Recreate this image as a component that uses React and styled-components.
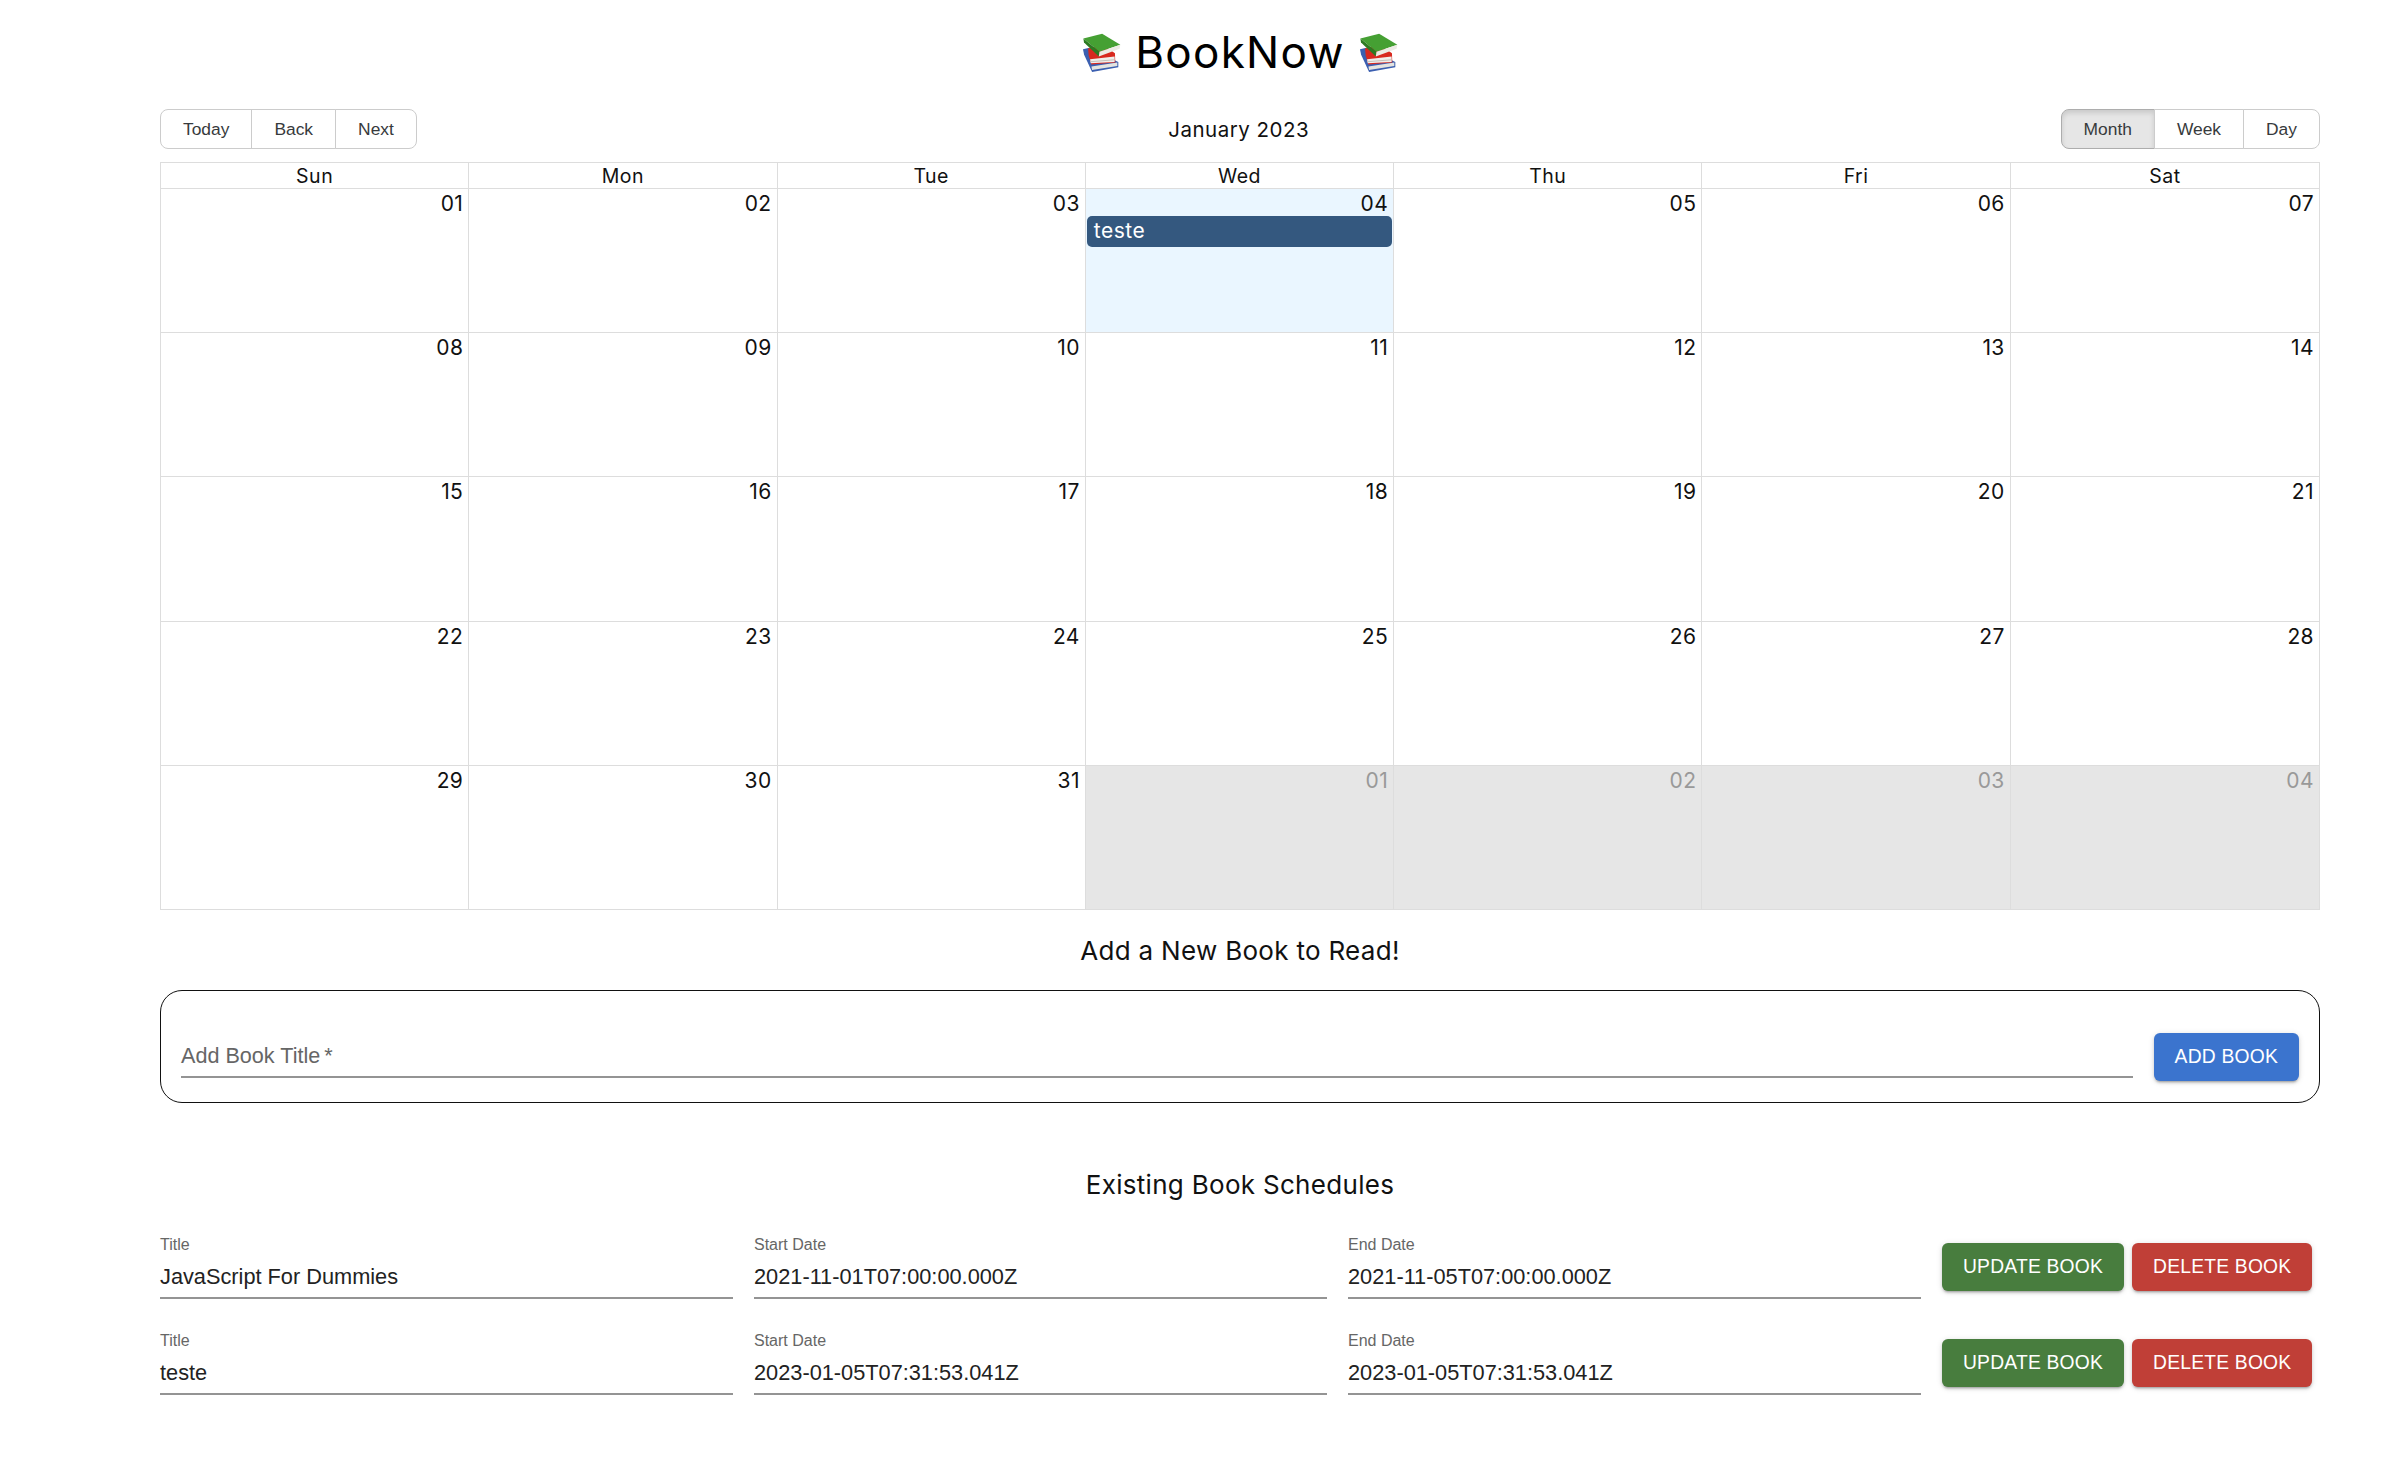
import React from 'react'
import styled, { createGlobalStyle } from 'styled-components'

const Global = createGlobalStyle`
  body {
    margin: 0;
    background: #fff;
    font-family: "Liberation Sans", Arial, sans-serif;
  }
`

const Page = styled.div`
  padding: 0 68px 0 160px;
  height: 1460px;
  box-sizing: border-box;
`
const Header = styled.h1`
  height: 104px;
  margin: 0 0 5px;
  display: flex;
  align-items: center;
  justify-content: center;
  gap: 14px;
  font: 400 44px "Inter", sans-serif;
  letter-spacing: 1.3px;
  color: #000;
`
const Toolbar = styled.div`
  display: flex;
  align-items: center;
  justify-content: space-between;
  height: 40px;
  margin-bottom: 13px;
`
const ToolbarLabel = styled.span`
  font: 400 20.5px "Inter", sans-serif;
  letter-spacing: 0.5px;
  color: #111;
  margin-top: 1px;
`
const BtnGroup = styled.div`
  display: flex;
`
const ToolBtn = styled.button`
  height: 40px;
  padding: 0 22px;
  margin: 0 0 0 -1px;
  border: 1px solid ${p => (p.$active ? '#adadad' : '#ccc')};
  background: ${p => (p.$active ? '#e6e6e6' : '#fff')};
  box-shadow: ${p => (p.$active ? 'inset 0 3px 5px rgba(0,0,0,.125)' : 'none')};
  color: #373a3c;
  font: 400 17.4px "Liberation Sans", Arial, sans-serif;
  &:first-child {
    margin-left: 0;
    border-radius: 8px 0 0 8px;
  }
  &:last-child {
    border-radius: 0 8px 8px 0;
  }
`
const Month = styled.div`
  height: 748px;
  box-sizing: border-box;
  border: 1px solid #ddd;
  display: flex;
  flex-direction: column;
  font-family: "Inter", sans-serif;
  color: #111;
`
const HeadRow = styled.div`
  display: grid;
  grid-template-columns: repeat(7, 1fr);
  height: 25px;
`
const HeadCell = styled.div`
  display: flex;
  align-items: center;
  justify-content: center;
  font-size: 19.5px;
  letter-spacing: 0.5px;
  border-right: 1px solid #ddd;
  &:last-child {
    border-right: 0;
  }
`
const Week = styled.div`
  flex: 1;
  display: grid;
  grid-template-columns: repeat(7, 1fr);
  border-top: 1px solid #ddd;
`
const Day = styled.div`
  background: ${p => (p.$today ? '#eaf6ff' : p.$off ? '#e6e6e6' : '#fff')};
  color: ${p => (p.$off ? '#999' : '#111')};
  min-width: 0;
  border-right: 1px solid #ddd;
  &:last-child {
    border-right: 0;
  }
`
const DayNum = styled.div`
  text-align: right;
  font-size: 21px;
  line-height: 25px;
  padding: 0 5px 0 0;
  margin-top: 2px;
  letter-spacing: 0.4px;
`
const Event = styled.div`
  height: 31px;
  margin: 0 1px;
  padding-left: 7px;
  border-radius: 5px;
  background: #34587f;
  color: #fff;
  font-size: 21px;
  line-height: 30px;
  letter-spacing: 0.5px;
`
const SectionTitle = styled.h2`
  margin: 0;
  height: 80px;
  display: flex;
  align-items: center;
  justify-content: center;
  font: 400 26px "Inter", sans-serif;
  letter-spacing: 0.3px;
  color: #111;
`
const ExistingTitle = styled(SectionTitle)`
  height: 38px;
  margin: 62px 0 30px;
`
const AddForm = styled.form`
  height: 113px;
  box-sizing: border-box;
  border: 1.5px solid #111;
  border-radius: 22px;
  padding: 42px 20px 0;
  display: flex;
  align-items: flex-start;
  gap: 21px;
`
const AddField = styled.div`
  flex: 1;
  height: 45px;
  box-sizing: border-box;
  border-bottom: 2px solid #949494;
  color: #666;
  font-size: 21.6px;
  line-height: 45px;
`
const Star = styled.span`
  margin-left: 4px;
`
const ActionBtn = styled.button`
  height: 48px;
  padding: 0 21px;
  border: 0;
  border-radius: 6px;
  background: ${p => p.$bg};
  color: #fff;
  font: 400 19.3px "Liberation Sans", Arial, sans-serif;
  letter-spacing: 0.2px;
  white-space: nowrap;
  box-shadow: 0 3px 2px -2px rgba(0,0,0,.2), 0 2px 3px 0 rgba(0,0,0,.14), 0 1px 6px 0 rgba(0,0,0,.12);
`
const BookRow = styled.div`
  display: flex;
  gap: 21px;
  margin-bottom: 30px;
`
const Field = styled.div`
  width: 573px;
  height: 66px;
  box-sizing: border-box;
  border-bottom: 2px solid #949494;
  padding-top: 3px;
`
const FieldLabel = styled.div`
  font-size: 16px;
  line-height: 18px;
  color: #666;
`
const FieldValue = styled.div`
  font-size: 21.75px;
  line-height: 26px;
  margin-top: 10px;
  color: #222;
`
const RowActions = styled.div`
  display: flex;
  gap: 8px;
  padding-top: 10px;
`
const BookIcon = styled.svg`
  width: 39px;
  height: 39px;
  flex: none;
  margin-top: 1px;
`

const Books = () => (
  <BookIcon viewBox="38 32 116 116">
    {/* blue book */}
    <polygon points="41,80 60,76 146,118 146,134 68,148 44,96" fill="#3b5fb0" />
    <polygon points="66,132 143,120 143,130 68,142" fill="#e4e4e0" />
    {/* red book */}
    <polygon points="56,78 100,66 136,92 137,120 66,126 58,100" fill="#d8291f" />
    <polygon points="62,110 135,102 135,118 64,122" fill="#f0eeea" />
    <polygon points="62,116 135,110 135,113 62,119" fill="#c4c0ba" />
    {/* green book */}
    <polygon points="42,48 98,34 152,67 90,88" fill="#45a033" />
    <polygon points="42,48 90,88 88,102 44,60" fill="#2c7a22" />
    <polygon points="90,88 152,67 150,79 88,102" fill="#ecebe4" />
  </BookIcon>
)

const weeks = [
  ['01', '02', '03', '04', '05', '06', '07'],
  ['08', '09', '10', '11', '12', '13', '14'],
  ['15', '16', '17', '18', '19', '20', '21'],
  ['22', '23', '24', '25', '26', '27', '28'],
  ['29', '30', '31', '01', '02', '03', '04'],
]
const dayNames = ['Sun', 'Mon', 'Tue', 'Wed', 'Thu', 'Fri', 'Sat']
const books = [
  { title: 'JavaScript For Dummies', start: '2021-11-01T07:00:00.000Z', end: '2021-11-05T07:00:00.000Z' },
  { title: 'teste', start: '2023-01-05T07:31:53.041Z', end: '2023-01-05T07:31:53.041Z' },
]

export default function App() {
  return (
    <Page>
      <Global />
      <Header>
        <Books />
        BookNow
        <Books />
      </Header>
      <Toolbar>
        <BtnGroup>
          <ToolBtn>Today</ToolBtn>
          <ToolBtn>Back</ToolBtn>
          <ToolBtn>Next</ToolBtn>
        </BtnGroup>
        <ToolbarLabel>January 2023</ToolbarLabel>
        <BtnGroup>
          <ToolBtn $active>Month</ToolBtn>
          <ToolBtn>Week</ToolBtn>
          <ToolBtn>Day</ToolBtn>
        </BtnGroup>
      </Toolbar>
      <Month>
        <HeadRow>
          {dayNames.map(d => <HeadCell key={d}>{d}</HeadCell>)}
        </HeadRow>
        {weeks.map((w, i) => (
          <Week key={i}>
            {w.map((d, j) => {
              const today = i === 0 && j === 3
              return (
                <Day key={d} $today={today} $off={i === 4 && j > 2}>
                  <DayNum>{d}</DayNum>
                  {today && <Event>teste</Event>}
                </Day>
              )
            })}
          </Week>
        ))}
      </Month>
      <SectionTitle>Add a New Book to Read!</SectionTitle>
      <AddForm>
        <AddField>Add Book Title<Star>*</Star></AddField>
        <ActionBtn type="button" $bg="#3b74ce">ADD BOOK</ActionBtn>
      </AddForm>
      <ExistingTitle>Existing Book Schedules</ExistingTitle>
      {books.map(b => (
        <BookRow key={b.title}>
          <Field><FieldLabel>Title</FieldLabel><FieldValue>{b.title}</FieldValue></Field>
          <Field><FieldLabel>Start Date</FieldLabel><FieldValue>{b.start}</FieldValue></Field>
          <Field><FieldLabel>End Date</FieldLabel><FieldValue>{b.end}</FieldValue></Field>
          <RowActions>
            <ActionBtn type="button" $bg="#487d3e">UPDATE BOOK</ActionBtn>
            <ActionBtn type="button" $bg="#c03f37">DELETE BOOK</ActionBtn>
          </RowActions>
        </BookRow>
      ))}
    </Page>
  )
}
